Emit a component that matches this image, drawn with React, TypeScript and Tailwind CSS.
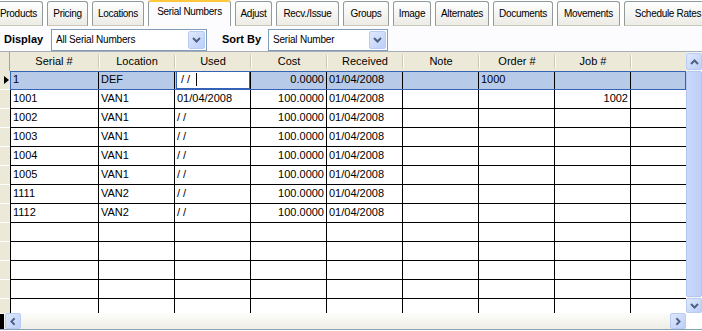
import React from "react";

const tabs = [
  { label: "Products", w: "w-[49px]" },
  { label: "Pricing", w: "w-[41px]" },
  { label: "Locations", w: "w-[52px]" },
  { label: "Serial Numbers", w: "w-[83px]", active: true },
  { label: "Adjust", w: "w-[37px]" },
  { label: "Recv./Issue", w: "w-[63px]" },
  { label: "Groups", w: "w-[46px]" },
  { label: "Image", w: "w-[38px]" },
  { label: "Alternates", w: "w-[54px]" },
  { label: "Documents", w: "w-[60px]" },
  { label: "Movements", w: "w-[63px]" },
  { label: "Schedule Rates", w: "w-[88px]" },
];

const cols = [
  { name: "Serial #", w: "w-[88px]" },
  { name: "Location", w: "w-[76px]" },
  { name: "Used", w: "w-[76px]" },
  { name: "Cost", w: "w-[76px]", right: true },
  { name: "Received", w: "w-[76px]" },
  { name: "Note", w: "w-[76px]" },
  { name: "Order #", w: "w-[76px]" },
  { name: "Job #", w: "w-[76px]", right: true },
  { name: "", w: "w-[56px]" },
];

const rows = [
  ["1", "DEF", " / /", "0.0000", "01/04/2008", "", "1000", "", ""],
  ["1001", "VAN1", "01/04/2008", "100.0000", "01/04/2008", "", "", "1002", ""],
  ["1002", "VAN1", "/ /", "100.0000", "01/04/2008", "", "", "", ""],
  ["1003", "VAN1", "/ /", "100.0000", "01/04/2008", "", "", "", ""],
  ["1004", "VAN1", "/ /", "100.0000", "01/04/2008", "", "", "", ""],
  ["1005", "VAN1", "/ /", "100.0000", "01/04/2008", "", "", "", ""],
  ["1111", "VAN2", "/ /", "100.0000", "01/04/2008", "", "", "", ""],
  ["1112", "VAN2", "/ /", "100.0000", "01/04/2008", "", "", "", ""],
  ["", "", "", "", "", "", "", "", ""],
  ["", "", "", "", "", "", "", "", ""],
  ["", "", "", "", "", "", "", "", ""],
  ["", "", "", "", "", "", "", "", ""],
  ["", "", "", "", "", "", "", "", ""],
];

const Chevron = ({ dir }: { dir: "up" | "down" | "left" | "right" }) => {
  const pts = {
    down: "1,1 4.5,4.5 8,1",
    up: "1,5 4.5,1.5 8,5",
    left: "5,1 1.5,4.5 5,8",
    right: "1.5,1 5,4.5 1.5,8",
  }[dir];
  const box = dir === "up" || dir === "down" ? "0 0 9 6" : "0 0 6.5 9";
  const size = dir === "up" || dir === "down" ? "w-[9px] h-[6px]" : "w-[6px] h-[9px]";
  return (
    <svg viewBox={box} className={size}>
      <polyline points={pts} fill="none" stroke="#4d6185" strokeWidth="2" />
    </svg>
  );
};

const XpButton = ({ dir, className }: { dir: "up" | "down" | "left" | "right"; className: string }) => (
  <div
    className={`flex items-center justify-center rounded-[2px] border border-[#b9cbf3] bg-linear-to-br from-[#dfe8fd] to-[#bccff9] ${className}`}
  >
    <Chevron dir={dir} />
  </div>
);

const Select = ({ value, w }: { value: string; w: string }) => (
  <div className={`flex h-[22px] ${w} items-center border border-[#7f9db9] bg-white pl-[4px] pr-px`}>
    <span className="flex-1 text-[10px] tracking-[-0.2px] text-black">{value}</span>
    <XpButton dir="down" className="h-[18px] w-[17px]" />
  </div>
);

export default function App() {
  return (
    <div className="h-[331px] w-[702px] overflow-hidden bg-white font-['Liberation_Sans',Arial,sans-serif] text-[11px] text-black">
      {/* tab strip */}
      <div className="flex h-[26px] items-end gap-[4px] -ml-[6px] bg-white">
        {tabs.map((t) =>
          t.active ? (
            <div
              key={t.label}
              className={`flex h-[26px] shrink-0 ${t.w} items-center justify-center rounded-t-[3px] border-x border-t-2 border-x-[#919b9c] border-t-[#ffc83c] bg-[#fcfcfe] pb-[5px] text-[10px] tracking-[-0.3px]`}
            >
              {t.label}
            </div>
          ) : (
            <div
              key={t.label}
              className={`flex h-[25px] shrink-0 ${t.w} items-center justify-center rounded-t-[3px] border border-[#919b9c] border-b-[#c9c7ba] bg-linear-to-b from-white to-[#ecebe5] text-[10px] tracking-[-0.3px]`}
            >
              {t.label}
            </div>
          )
        )}
      </div>

      {/* filter bar */}
      <div className="flex h-[25px] items-center bg-[#fcfcfe] pt-[2px]">
        <span className="w-[51px] pb-px pl-[4px] text-[11px] font-bold">Display</span>
        <Select value="All Serial Numbers" w="w-[156px]" />
        <span className="ml-[15px] w-[46px] pb-px text-[11px] font-bold">Sort By</span>
        <Select value="Serial Number" w="w-[120px]" />
      </div>

      {/* grid */}
      <div className="flex h-[262px] border-t border-[#a7aeb8]">
        <div className="w-[686px] overflow-hidden">
          <div className="flex h-[19px] bg-[#ece9d8]">
            <div className="w-[10px] shrink-0 border-r border-[#a6a391]" />
            {cols.map((c, i) => (
              <div key={i} className={`flex shrink-0 ${c.w} items-center pb-px`}>
                {i > 0 && <div className="h-[13px] w-[2px] shrink-0 border-l border-r border-l-[#cbc7b6] border-r-white" />}
                <span className="flex-1 text-center">{c.name}</span>
              </div>
            ))}
          </div>
          {rows.map((r, ri) => {
            const sel = ri === 0;
            return (
              <div key={ri} className="flex h-[19px]">
                <div className="flex w-[10px] shrink-0 items-center justify-center border-b border-white bg-[#ece9d8]">
                  {sel && (
                    <svg viewBox="0 0 5 8" className="ml-[2px] h-[8px] w-[5px]">
                      <polygon points="0,0 5,4 0,8" fill="#000" />
                    </svg>
                  )}
                </div>
                <div
                  className={`flex ${sel ? "bg-[#b7cbe8] outline outline-1 -outline-offset-1 outline-[#3462b6]" : ""}`}
                >
                  {cols.map((c, ci) => {
                    const editing = sel && ci === 2;
                    return (
                      <div
                        key={ci}
                        className={`flex shrink-0 ${c.w} items-center border-b border-l ${
                          sel ? "border-b-[#3462b6]" : "border-b-black"
                        } border-l-black pb-px ${c.right ? "justify-end pr-[2px]" : "pl-[2px]"}`}
                      >
                        {editing ? (
                          <div className="-ml-[1px] flex h-[18px] w-[75px] items-center border border-[#3462b6] bg-white pl-[4px]">
                            <span>/ /</span>
                            <span className="ml-[6px] h-[13px] w-px bg-black" />
                          </div>
                        ) : (
                          r[ci]
                        )}
                      </div>
                    );
                  })}
                </div>
              </div>
            );
          })}
        </div>
        {/* vertical scrollbar */}
        <div className="flex w-[16px] flex-col gap-px bg-[#f4f3ee] pt-px">
          <XpButton dir="up" className="h-[17px] w-[16px]" />
          <div className="flex-1 rounded-[2px] border border-[#b2c6f1] bg-linear-to-r from-[#c9d8fc] to-[#bed0f8]" />
          <XpButton dir="down" className="h-[15px] w-[16px]" />
        </div>
      </div>

      {/* horizontal scrollbar */}
      <div className="flex h-[16px] items-stretch bg-linear-to-b from-[#fdfdfb] to-[#eeede6]">
        <div className="mt-px w-[4px] bg-black" />
        <XpButton dir="left" className="ml-px w-[16px]" />
        <div className="flex-1" />
        <XpButton dir="right" className="w-[16px]" />
        <div className="w-[16px] bg-white" />
      </div>
      <div className="h-px bg-[#8aa0b8]" />
      <div className="h-px bg-white" />
    </div>
  );
}
